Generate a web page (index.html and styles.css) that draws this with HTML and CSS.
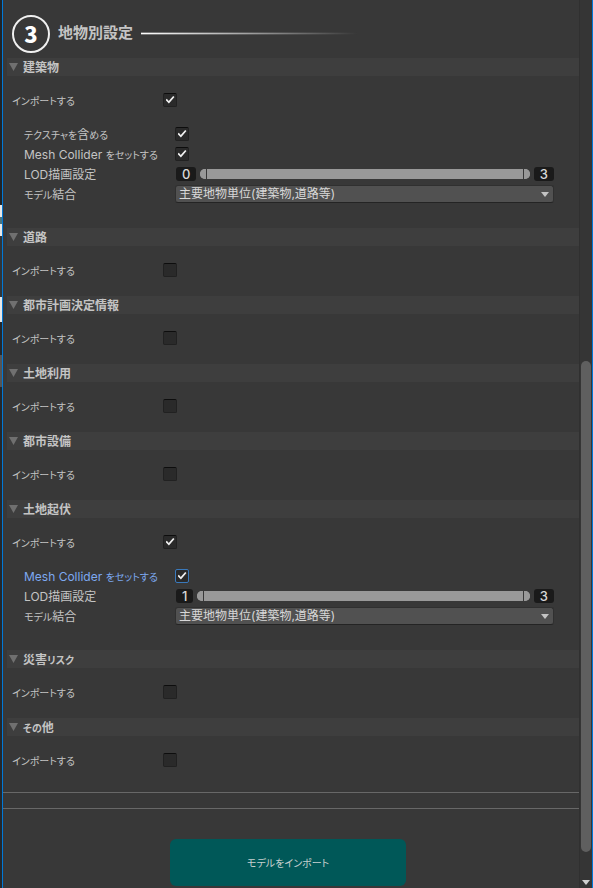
FILE: index.html
```html
<!DOCTYPE html>
<html lang="ja">
<head>
<meta charset="utf-8">
<title>地物別設定</title>
<link rel="stylesheet" href="styles.css">
</head>
<body>
<div class="window">
<div class="backdrop"></div>
<main class="content">
  <header class="title">
    <span class="step">3</span>
    <h1>地物別設定</h1>
    <span class="rule"></span>
  </header>

  <section>
    <h2><svg class="fold" viewBox="0 0 9 8"><path d="M0 0H9L4.5 8Z"/></svg><span>建築物</span></h2>
    <div class="row import"><label for="i1"><span class="kana">インポートする</span></label><input id="i1" type="checkbox" checked></div>
    <div class="details">
      <div class="row"><label for="t1"><span class="kana">テクスチャを</span>含<span class="kana">める</span></label><input id="t1" type="checkbox" checked></div>
      <div class="row"><label for="m1">Mesh Collider <span class="kana">をセットする</span></label><input id="m1" type="checkbox" checked></div>
      <div class="row"><label for="l1">LOD描画設定</label>
        <div class="lod"><output>0</output><div class="range"><input id="l1" type="range" class="low" min="0" max="3" value="0"><input aria-label="LOD最大" type="range" class="high" min="0" max="3" value="3"></div><output>3</output></div></div>
      <div class="row"><label for="s1"><span class="kana">モデル</span>結合</label>
        <div class="drop"><select id="s1"><option>主要地物単位(建築物,道路等)</option></select><svg viewBox="0 0 8 5"><path d="M0 0H8L4 5Z"/></svg></div></div>
    </div>
  </section>

  <section>
    <h2><svg class="fold" viewBox="0 0 9 8"><path d="M0 0H9L4.5 8Z"/></svg><span>道路</span></h2>
    <div class="row import"><label for="i2"><span class="kana">インポートする</span></label><input id="i2" type="checkbox"></div>
  </section>
  <section>
    <h2><svg class="fold" viewBox="0 0 9 8"><path d="M0 0H9L4.5 8Z"/></svg><span>都市計画決定情報</span></h2>
    <div class="row import"><label for="i3"><span class="kana">インポートする</span></label><input id="i3" type="checkbox"></div>
  </section>
  <section>
    <h2><svg class="fold" viewBox="0 0 9 8"><path d="M0 0H9L4.5 8Z"/></svg><span>土地利用</span></h2>
    <div class="row import"><label for="i4"><span class="kana">インポートする</span></label><input id="i4" type="checkbox"></div>
  </section>
  <section>
    <h2><svg class="fold" viewBox="0 0 9 8"><path d="M0 0H9L4.5 8Z"/></svg><span>都市設備</span></h2>
    <div class="row import"><label for="i5"><span class="kana">インポートする</span></label><input id="i5" type="checkbox"></div>
  </section>

  <section>
    <h2><svg class="fold" viewBox="0 0 9 8"><path d="M0 0H9L4.5 8Z"/></svg><span>土地起伏</span></h2>
    <div class="row import"><label for="i6"><span class="kana">インポートする</span></label><input id="i6" type="checkbox" checked></div>
    <div class="details">
      <div class="row active"><label for="m6">Mesh Collider <span class="kana">をセットする</span></label><input id="m6" type="checkbox" checked></div>
      <div class="row"><label for="l6">LOD描画設定</label>
        <div class="lod"><output>1</output><div class="range"><input id="l6" type="range" class="low" min="1" max="3" value="1"><input aria-label="LOD最大" type="range" class="high" min="1" max="3" value="3"></div><output>3</output></div></div>
      <div class="row"><label for="s6"><span class="kana">モデル</span>結合</label>
        <div class="drop"><select id="s6"><option>主要地物単位(建築物,道路等)</option></select><svg viewBox="0 0 8 5"><path d="M0 0H8L4 5Z"/></svg></div></div>
    </div>
  </section>

  <section>
    <h2><svg class="fold" viewBox="0 0 9 8"><path d="M0 0H9L4.5 8Z"/></svg><span>災害<span class="kana">リスク</span></span></h2>
    <div class="row import"><label for="i7"><span class="kana">インポートする</span></label><input id="i7" type="checkbox"></div>
  </section>
  <section>
    <h2><svg class="fold" viewBox="0 0 9 8"><path d="M0 0H9L4.5 8Z"/></svg><span><span class="kana">その</span>他</span></h2>
    <div class="row import"><label for="i8"><span class="kana">インポートする</span></label><input id="i8" type="checkbox"></div>
  </section>

  <div class="divider"></div>
  <button class="submit" type="button"><span class="kana">モデルをインポート</span></button>
</main>
<div class="scrollbar">
  <div class="thumb"></div>
  <svg viewBox="0 0 8 5"><path d="M0 0H8L4 5Z"/></svg>
</div>
</div>
</body>
</html>
```
FILE: styles.css
```css
* { box-sizing: border-box; }

body {
  margin: 0;
  background: #383838;
  color: #c4c4c4;
  font: 12px/20px Inter, "Noto Sans CJK JP", sans-serif;
  font-feature-settings: "palt";
}

/* Kana are set smaller than the kanji beside them */
.kana { font-size: 10px; }

.window {
  display: flex;
  min-height: 100vh;
  border-right: 1px solid #0078d7;
}

/* Sliver of the window that lies behind this one */
.backdrop {
  flex: none;
  width: 3px;
  border-right: 1px solid #0078d7;
  background: linear-gradient(#202427 205px, #e8e8e8 205px 217px, #4b7580 217px 224px, #e8e8e8 224px 236px, #30363a 236px 297px, #e8e8e8 297px 322px, #24282c 322px 355px, #555 355px 387px, #24282c 387px);
}

.content { flex: 1; min-width: 0; }

.title {
  display: flex;
  align-items: center;
  height: 58px;
  padding: 8px 9px 0;
}
.step {
  flex: none;
  width: 38px;
  height: 38px;
  margin-top: 2px;
  border: 2px solid #f0f0f0;
  border-radius: 50%;
  color: #fff;
  font: 900 22px/32px "Noto Sans CJK JP", sans-serif;
  text-align: center;
}
h1 {
  margin: 0 8px;
  font-size: 15px;
  font-weight: 700;
}
.rule {
  width: 216px;
  height: 3px;
  border: solid #383838aa;
  border-width: 1px 0;
  background: linear-gradient(90deg, #fff, #a0a0a0 50%, transparent) border-box;
}

section { padding: 0 0 16px 4px; }
section:has(.details) { padding-bottom: 24px; }
h2 {
  display: flex;
  align-items: center;
  gap: 5px;
  height: 18px;
  margin: 0 0 14px;
  padding-left: 2px;
  background: #3e3e3e;
  font-size: 12px;
  font-weight: 700;
}
h2 > span { padding-top: 2px; }
.fold { width: 9px; height: 8px; fill: #707070; }

.row {
  display: flex;
  align-items: center;
  height: 20px;
}
.row > label { flex: none; width: 151px; padding-top: 2px; white-space: nowrap; }
.import { padding-left: 5px; }
.details { padding: 14px 25px 0 17px; }
.active label { color: #7da9f0; }

input[type="checkbox"] {
  appearance: none;
  display: grid;
  place-items: center;
  width: 14px;
  height: 14px;
  margin: 0;
  border: 1px solid #212121;
  border-top-color: #0d0d0d;
  border-radius: 2px;
  background: #2a2a2a;
}
input[type="checkbox"]:checked::before {
  content: "";
  width: 9px;
  height: 8px;
  background: #f0f0f0;
  clip-path: polygon(0 50%, 15% 35%, 36% 62%, 85% 0, 100% 14%, 38% 94%);
}
.active input[type="checkbox"] { border-color: #3a79bb; }

.lod {
  display: flex;
  flex: 1;
  align-items: center;
  gap: 4px;
  padding-left: 1px;
}
output {
  padding: 0 6px;
  border-radius: 3px;
  background: #1a1a1a;
  color: #d8d8d8;
  font-size: 13px;
  font-weight: 500;
  line-height: 14px;
}
.range {
  display: grid;
  flex: 1;
  height: 10px;
  border-radius: 5px;
  background: #999;
  overflow: hidden;
}
.range input {
  grid-area: 1 / 1;
  appearance: none;
  width: 100%;
  height: 10px;
  margin: 0;
  background: transparent;
  pointer-events: none;
}
.range input::-webkit-slider-thumb {
  appearance: none;
  width: 7px;
  height: 10px;
  background: #999;
  pointer-events: auto;
}
.low::-webkit-slider-thumb { border-right: 1px solid #383838; }
.high::-webkit-slider-thumb { border-left: 1px solid #383838; }

.drop { display: grid; flex: 1; align-items: center; }
.drop select {
  grid-area: 1 / 1;
  appearance: none;
  width: 100%;
  height: 18px;
  padding: 0 20px 0 3px;
  border: 1px solid #303030;
  border-bottom-color: #242424;
  border-radius: 3px;
  background: #515151;
  color: #d8d8d8;
  font: inherit;
  line-height: 16px;
}
.drop svg {
  grid-area: 1 / 1;
  justify-self: end;
  width: 8px;
  height: 5px;
  margin-right: 5px;
  fill: #c4c4c4;
  pointer-events: none;
}

.divider {
  height: 17px;
  margin-top: 6px;
  border: solid #686868;
  border-width: 1px 0;
}
.submit {
  display: block;
  width: 41%;
  height: 47px;
  margin: 30px 0 2px 29%;
  border: 0;
  border-radius: 6px;
  background: #005858;
  color: #c8d0d0;
  font: inherit;
}

.scrollbar {
  display: flex;
  flex: none;
  flex-direction: column;
  align-items: center;
  width: 13px;
  padding-bottom: 3px;
  border-left: 1px solid #303030;
  background: #353535;
}
.thumb {
  width: 10px;
  height: 491px;
  margin: auto 0 28px;
  border-radius: 5px;
  background: #5f5f5f;
}
.scrollbar svg { width: 8px; height: 5px; fill: #d0d0d0; }
```
